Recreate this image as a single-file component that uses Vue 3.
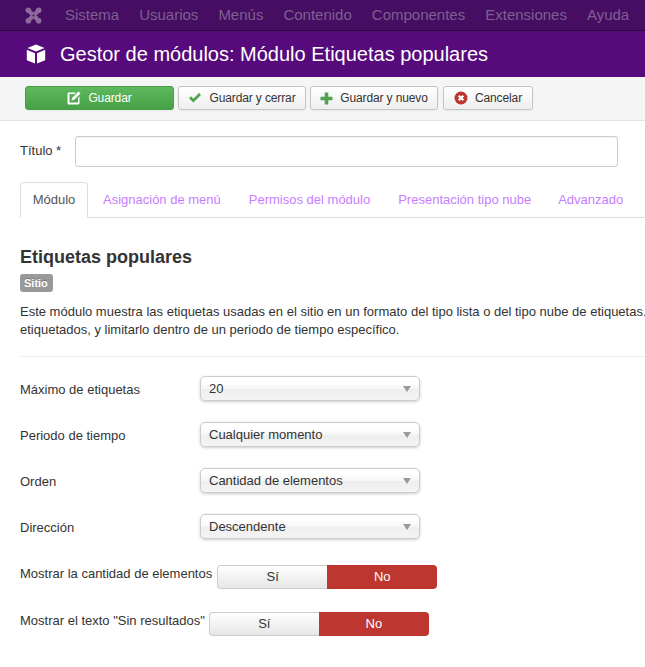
<script setup>
const tabs = ['Asignación de menú', 'Permisos del módulo', 'Presentación tipo nube', 'Advanzado']
const nav = ['Sistema', 'Usuarios', 'Menús', 'Contenido', 'Componentes', 'Extensiones', 'Ayuda']
const selects = [
  { label: 'Máximo de etiquetas', value: '20' },
  { label: 'Periodo de tiempo', value: 'Cualquier momento' },
  { label: 'Orden', value: 'Cantidad de elementos' },
  { label: 'Dirección', value: 'Descendente' },
]
</script>

<template>
  <div class="page">
    <nav class="nav">
      <svg class="logo" width="17" height="17" viewBox="0 0 17 17">
        <g fill="#8c6a9c">
          <circle cx="3.300" cy="3.300" r="2.800" />
          <circle cx="13.700" cy="3.300" r="2.800" />
          <circle cx="3.300" cy="13.700" r="2.800" />
          <circle cx="13.700" cy="13.700" r="2.800" />
        </g>
        <path d="M3.500 3.500 13.500 13.500M13.500 3.500 3.500 13.500" stroke="#8c6a9c" stroke-width="4.200" />
        <circle cx="8.500" cy="8.500" r="1" fill="#460e62" />
      </svg>
      <a v-for="n in nav" :key="n" class="nav-item">{{ n }}</a>
    </nav>
    <header class="title-bar">
      <svg class="cube" width="20" height="20" viewBox="0 0 20 20">
        <path fill="#fff" d="M10 .5 18.500 4 10 7.500 1.500 4zM.8 5.800 9 9.200V19.500L.8 16.200zM19.200 5.800 11 9.200V19.500L19.200 16.200z" />
      </svg>
      <h1>Gestor de módulos: Módulo Etiquetas populares</h1>
    </header>
    <div class="toolbar">
      <button class="btn save">
        <svg width="14" height="14" viewBox="0 0 14 14"><path fill="#fff" d="M1.800 1.500H9L7.500 3H2.500v8.500H11V7l1.500-1.500v6.500c0 .8-.6 1.500-1.500 1.500H1.800C1 13.500.5 12.800.5 12V3C.5 2.200 1 1.500 1.800 1.500z" /><path fill="#fff" d="M11.500.5l2 2-6.300 6.300-2.700.7.700-2.700z" /></svg>
        <span>Guardar</span>
      </button>
      <button class="btn w1">
        <svg width="14" height="12" viewBox="0 0 14 12"><path fill="#51a351" d="M1 6.300 3 4.300 5.400 6.700 11 1l2 2L5.400 10.600z" /></svg>
        <span>Guardar y cerrar</span>
      </button>
      <button class="btn w2">
        <svg width="13" height="13" viewBox="0 0 13 13"><path fill="#51a351" d="M4.700.5h3.600v4.200h4.200v3.600H8.300v4.200H4.700V8.300H.5V4.700h4.200z" /></svg>
        <span>Guardar y nuevo</span>
      </button>
      <button class="btn w3">
        <svg width="14" height="14" viewBox="0 0 14 14"><circle cx="7" cy="7" r="6.500" fill="#bd362f" /><path stroke="#fff" stroke-width="2.200" d="M4.700 4.700l4.600 4.600M9.300 4.700l-4.600 4.600" /></svg>
        <span>Cancelar</span>
      </button>
    </div>
    <main class="content">
      <div class="title-row">
        <label>Título *</label>
        <div class="input"></div>
      </div>
      <div class="tabs">
        <a class="tab active">Módulo</a>
        <a v-for="t in tabs" :key="t" class="tab">{{ t }}</a>
      </div>
      <h2>Etiquetas populares</h2>
      <span class="badge">Sitio</span>
      <p class="desc">Este módulo muestra las etiquetas usadas en el sitio en un formato del tipo lista o del tipo nube de etiquetas.<br />etiquetados, y limitarlo dentro de un periodo de tiempo específico.</p>
      <hr />
      <div v-for="s in selects" :key="s.label" class="field">
        <label class="lbl">{{ s.label }}</label>
        <div class="select">
          <span>{{ s.value }}</span>
          <i class="caret"></i>
        </div>
      </div>
      <div class="switch-field first">
        <label>Mostrar la cantidad de elementos</label>
        <div class="switch"><span class="yes">Sí</span><span class="no">No</span></div>
      </div>
      <div class="switch-field second">
        <label>Mostrar el texto "Sin resultados"</label>
        <div class="switch"><span class="yes">Sí</span><span class="no">No</span></div>
      </div>
    </main>
  </div>
</template>

<style>
html, body { margin: 0; overflow: hidden; background: #fff; }
</style>

<style scoped>
.page {
  width: 645px;
  height: 667px;
  overflow: hidden;
  font-family: "Liberation Sans", Arial, sans-serif;
  font-size: 13px;
  line-height: 18px;
  color: #333;
}
.nav {
  height: 30px;
  display: flex;
  align-items: center;
  background: #460e62;
  border-bottom: 1px solid #2a0b3a;
  padding-left: 25px;
  white-space: nowrap;
}
.logo { margin-right: 23px; flex: none; }
.nav-item { font-size: 15px; color: #7f5f91; margin-right: 20px; }
.title-bar {
  height: 46px;
  background: #560a7b;
  display: flex;
  align-items: center;
  padding-left: 26px;
}
.cube { margin-right: 14px; flex: none; }
h1 { margin: 0; font-size: 20px; font-weight: 400; color: #fff; white-space: nowrap; }
.toolbar {
  height: 34px;
  background: #f5f5f5;
  border-bottom: 1px solid #e3e3e3;
  display: flex;
  gap: 4px;
  align-items: flex-start;
  padding: 9px 0 0 25px;
}
.btn {
  height: 24px;
  display: inline-flex;
  align-items: center;
  justify-content: center;
  gap: 7px;
  padding: 0;
  border: 1px solid #c4c4c4;
  border-radius: 3px;
  background: linear-gradient(#fff, #efefef);
  box-shadow: 0 1px 2px rgba(0, 0, 0, .05);
  color: #333;
  font: 12px/18px "Liberation Sans", Arial, sans-serif;
  letter-spacing: -.12px;
  box-sizing: border-box;
}
.btn.save {
  width: 149px;
  color: #fff;
  border-color: #46a046;
  background: linear-gradient(#5eb95e, #46a046);
  gap: 7px;
}
.btn.w1 { width: 128px; }
.btn.w2 { width: 128px; margin-right: 1px; }
.btn.w3 { width: 90px; }
.content { padding: 15px 0 0 20px; }
.title-row { display: flex; align-items: flex-start; height: 31px; }
.title-row label { width: 55px; line-height: 30px; }
.input {
  width: 543px;
  height: 31px;
  box-sizing: border-box;
  border: 1px solid #ccc;
  border-radius: 3px;
  box-shadow: inset 0 1px 1px rgba(0, 0, 0, .05);
}
.tabs {
  width: 625px;
  margin-top: 15px;
  height: 35px;
  display: flex;
  border-bottom: 1px solid #ddd;
  white-space: nowrap;
}
.tab {
  color: #c77dff;
  padding: 0 15px 0 12px;
  line-height: 35px;
  height: 35px;
  box-sizing: border-box;
  margin-right: 1px;
}
.tab:last-child { margin-left: -1px; }
.tab.active {
  width: 68px;
  padding: 0;
  text-align: center;
  color: #555;
  background: #fff;
  border: 1px solid #ddd;
  border-bottom-color: #fff;
  border-radius: 4px 4px 0 0;
  height: 36px;
  line-height: 33px;
  margin-right: 3px;
}
h2 { margin: 28px 0 0; font-size: 18px; line-height: 22px; font-weight: 700; color: #333; }
.badge {
  display: inline-block;
  margin-top: 6px;
  background: #999;
  color: #fff;
  font-size: 11px;
  font-weight: 700;
  line-height: 14px;
  padding: 2px 5px 2px 4px;
  border-radius: 3px;
  text-shadow: 0 -1px 0 rgba(0, 0, 0, .25);
}
.desc { margin: 11px 0 0; white-space: nowrap; line-height: 18px; }
hr { margin: 17px 0 0; border: 0; border-top: 1px solid #eee; }
.field { display: flex; align-items: flex-start; height: 46px; }
hr + .field { margin-top: 19px; }
.lbl { width: 180px; line-height: 26px; padding-top: 1px; }
.select {
  width: 220px;
  height: 25px;
  box-sizing: border-box;
  border: 1px solid #ccc;
  border-radius: 5px;
  background: linear-gradient(#fff 20%, #f6f6f6 50%, #eee 52%, #f4f4f4);
  box-shadow: 0 1px 3px rgba(0, 0, 0, .2);
  display: flex;
  align-items: center;
  justify-content: space-between;
  padding: 0 8px;
  line-height: 21px;
}
.select span { padding-bottom: 0; }
.caret {
  width: 0;
  height: 0;
  border-left: 4px solid transparent;
  border-right: 4px solid transparent;
  border-top: 6px solid #999;
}
.switch-field { display: flex; align-items: flex-start; height: 47px; white-space: nowrap; }
.switch-field label { line-height: 18px; padding-right: 5px; }
.switch-field.second label { padding-right: 4px; }
.switch { display: flex; width: 220px; height: 24px; }
.switch span { display: flex; align-items: center; justify-content: center; font-size: 13px; }
.yes {
  width: 110px;
  box-sizing: border-box;
  border: 1px solid #ccc;
  border-right: 0;
  border-radius: 4px 0 0 4px;
  background: linear-gradient(#fff, #e6e6e6);
  color: #333;
}
.no {
  width: 110px;
  background: #bd362f;
  color: #fff;
  border-radius: 0 4px 4px 0;
}
.switch-field.first { margin-top: 5px; }
</style>
